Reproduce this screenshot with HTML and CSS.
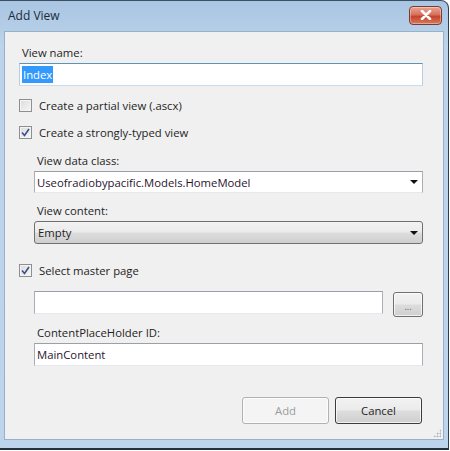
FILE: index.html
```html
<!DOCTYPE html>
<html lang="en">
<head>
    <meta charset="UTF-8">
    <title>Add View</title>
    <link rel="stylesheet" href="styles.css">
</head>
<body>
    <div class="window">
        <div class="titlebar">
            <span class="title">Add View</span>
            <button class="close-btn" title="Close">
                <svg width="12" height="10" viewBox="0 0 12 10">
                    <path d="M2 1 L10 9 M10 1 L2 9" stroke="#fff" stroke-width="2.6" stroke-linecap="round"/>
                </svg>
            </button>
        </div>

        <div class="client">
            <div class="label">View name:</div>
            <div class="textbox name-box"><span class="selected">Index</span></div>

            <div class="check-row first">
                <span class="checkbox"></span>
                <span>Create a partial view (.ascx)</span>
            </div>
            <div class="check-row">
                <span class="checkbox checked">
                    <svg width="9" height="9" viewBox="0 0 9 9"><path d="M1 4.5 L3.5 7.5 L8 1" fill="none" stroke="#3b4f8a" stroke-width="1.6"/></svg>
                </span>
                <span>Create a strongly-typed view</span>
            </div>

            <div class="indent">
                <div class="label">View data class:</div>
                <div class="textbox combo">
                    <span class="value">Useofradiobypacific.Models.HomeModel</span>
                    <span class="arrow"></span>
                </div>

                <div class="label">View content:</div>
                <div class="dropdown">
                    <span>Empty</span>
                    <span class="arrow"></span>
                </div>
            </div>

            <div class="check-row master">
                <span class="checkbox checked">
                    <svg width="9" height="9" viewBox="0 0 9 9"><path d="M1 4.5 L3.5 7.5 L8 1" fill="none" stroke="#3b4f8a" stroke-width="1.6"/></svg>
                </span>
                <span>Select master page</span>
            </div>

            <div class="indent">
                <div class="browse-row">
                    <div class="textbox master-box"></div>
                    <button class="btn browse">...</button>
                </div>
                <div class="label">ContentPlaceHolder ID:</div>
                <div class="textbox"><span class="value">MainContent</span></div>
            </div>

            <div class="actions">
                <button class="btn" disabled>Add</button>
                <button class="btn default">Cancel</button>
            </div>
            <div class="grip"></div>
        </div>
    </div>
</body>
</html>
```

FILE: styles.css
```css
* {
    box-sizing: border-box;
}

body {
    margin: 0;
    width: 450px;
    height: 451px;
    background: #ffffff;
    font-family: "Open Sans", "Noto Sans", sans-serif;
    font-size: 11.3px;
    color: #1e1e1e;
}

/* outer frame */
.window {
    width: 449px;
    height: 450px;
    background: linear-gradient(180deg, #a9c5e2 0%, #bcd3eb 10%, #bdd4ec 100%);
    border-top: 1px solid #3b4f63;
    border-right: 1px solid #2f3f50;
    border-bottom: 2px solid #23313f;
    border-top-right-radius: 8px;
    padding: 0 4px 0 4px;
    display: flex;
    flex-direction: column;
}

.titlebar {
    height: 30px;
    display: flex;
    align-items: center;
    justify-content: space-between;
    padding: 0 0 0 4px;
}

.title {
    font-size: 12px;
    color: #1b2a3a;
    margin-top: -2px;
}

.close-btn {
    width: 33px;
    height: 19px;
    margin-top: -2px;
    margin-right: 2px;
    border: 1px solid #7a3b30;
    border-radius: 4px;
    background: linear-gradient(180deg, #e9a493 0%, #d9705a 45%, #c6432b 55%, #d77a5e 100%);
    display: flex;
    align-items: center;
    justify-content: center;
    padding: 0;
    box-shadow: inset 0 0 0 1px rgba(255, 255, 255, 0.35);
}

/* dialog body */
.client {
    position: relative;
    flex: 1;
    margin-bottom: 8px;
    background: #f0f0f0;
    border: 1px solid #98b0c8;
    padding: 13px 20px 0 14px;
    display: flex;
    flex-direction: column;
}

.label {
    height: 16px;
    line-height: 16px;
    padding-left: 3px;
    margin-bottom: 2px;
}

.textbox {
    height: 23px;
    background: #fff;
    border: 1px solid #abadb3;
    border-top-color: #9aa0a8;
    border-bottom-color: #e3e9ef;
    display: flex;
    align-items: center;
    padding: 0 2px;
    color: #2a1430;
}

.name-box {
    border-color: #5c93bc #b5cfe7 #c9dcee #b5cfe7;
}

.selected {
    background: #3399ff;
    color: #fff;
    padding: 0 1px;
    line-height: 17px;
}

.check-row {
    display: flex;
    align-items: center;
    gap: 7px;
    height: 16px;
    margin-top: 11px;
}

.checkbox {
    width: 13px;
    height: 13px;
    border: 1px solid #8e8f8f;
    background: linear-gradient(135deg, #dcdcdc 0%, #f6f6f6 100%);
    box-shadow: inset 0 0 0 1px #f4f4f4;
    display: flex;
    align-items: center;
    justify-content: center;
}

.indent {
    padding-left: 15px;
    display: flex;
    flex-direction: column;
}

.check-row + .indent {
    margin-top: 13px;
}

.combo {
    height: 22px;
    justify-content: space-between;
    padding-right: 4px;
    margin-bottom: 10px;
}

.arrow {
    width: 0;
    height: 0;
    border-left: 4px solid transparent;
    border-right: 4px solid transparent;
    border-top: 4px solid #111;
}

.dropdown {
    height: 23px;
    border: 1px solid #707070;
    border-radius: 3px;
    background: linear-gradient(180deg, #f2f2f2 0%, #ebebeb 48%, #dddddd 52%, #cfcfcf 100%);
    display: flex;
    align-items: center;
    justify-content: space-between;
    padding: 0 4px 0 3px;
}

.check-row.master {
    margin-top: 18px;
}

.check-row.master + .indent {
    margin-top: 13px;
}

.browse-row {
    display: flex;
    align-items: flex-start;
    gap: 10px;
    margin-bottom: 8px;
}

.master-box {
    flex: 1;
}

.btn {
    font-family: inherit;
    font-size: 11.3px;
    color: #1e1e1e;
    border: 1px solid #707070;
    border-radius: 3px;
    background: linear-gradient(180deg, #f2f2f2 0%, #ebebeb 48%, #dddddd 52%, #cfcfcf 100%);
    box-shadow: inset 0 0 0 1px rgba(255, 255, 255, 0.7);
    padding: 0;
}

.browse {
    width: 30px;
    height: 25px;
    margin-top: 1px;
    font-size: 9px;
    color: #555;
    padding-top: 3px;
}

.actions {
    display: flex;
    justify-content: flex-end;
    gap: 6px;
    margin-top: 31px;
    margin-right: 1px;
}

.actions .btn {
    width: 87px;
    height: 27px;
}

.btn:disabled {
    color: #9c9c9c;
    border-color: #adb2b5;
    background: #f4f4f4;
}

.btn.default {
    border-color: #3c3c3c;
}

/* resize grip dots */
.grip {
    position: absolute;
    right: 2px;
    bottom: 2px;
    width: 8px;
    height: 8px;
    background-image: radial-gradient(circle, #b0b0b0 0.8px, transparent 1.2px);
    background-size: 3px 3px;
    clip-path: polygon(100% 0, 100% 100%, 0 100%);
}
```
